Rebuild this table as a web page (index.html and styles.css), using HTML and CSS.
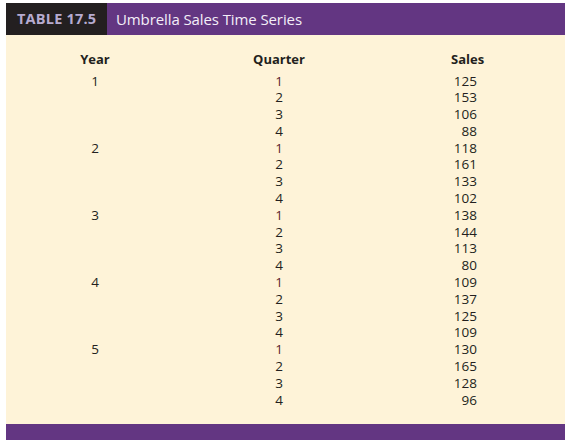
FILE: index.html
```html
<!DOCTYPE html>
<html>
<head>
<meta charset="utf-8">
<link rel="stylesheet" href="styles.css">
</head>
<body>
<div class="table">
  <div class="caption">
    <div class="label">TABLE 17.5</div>
    <div class="title">Umbrella Sales Time Series</div>
  </div>
  <div class="body">
    <div class="grid">
      <div class="h c1">Year</div><div class="h c2">Quarter</div><div class="h c3">Sales</div>
      <div class="c1">1</div><div class="c2 q1">1</div><div class="c3"><span>125</span></div>
      <div class="c1"></div><div class="c2">2</div><div class="c3"><span>153</span></div>
      <div class="c1"></div><div class="c2">3</div><div class="c3"><span>106</span></div>
      <div class="c1"></div><div class="c2">4</div><div class="c3"><span>88</span></div>
      <div class="c1">2</div><div class="c2 q1">1</div><div class="c3"><span>118</span></div>
      <div class="c1"></div><div class="c2">2</div><div class="c3"><span>161</span></div>
      <div class="c1"></div><div class="c2">3</div><div class="c3"><span>133</span></div>
      <div class="c1"></div><div class="c2">4</div><div class="c3"><span>102</span></div>
      <div class="c1">3</div><div class="c2 q1">1</div><div class="c3"><span>138</span></div>
      <div class="c1"></div><div class="c2">2</div><div class="c3"><span>144</span></div>
      <div class="c1"></div><div class="c2">3</div><div class="c3"><span>113</span></div>
      <div class="c1"></div><div class="c2">4</div><div class="c3"><span>80</span></div>
      <div class="c1">4</div><div class="c2 q1">1</div><div class="c3"><span>109</span></div>
      <div class="c1"></div><div class="c2">2</div><div class="c3"><span>137</span></div>
      <div class="c1"></div><div class="c2">3</div><div class="c3"><span>125</span></div>
      <div class="c1"></div><div class="c2">4</div><div class="c3"><span>109</span></div>
      <div class="c1">5</div><div class="c2 q1">1</div><div class="c3"><span>130</span></div>
      <div class="c1"></div><div class="c2">2</div><div class="c3"><span>165</span></div>
      <div class="c1"></div><div class="c2">3</div><div class="c3"><span>128</span></div>
      <div class="c1"></div><div class="c2">4</div><div class="c3"><span>96</span></div>
    </div>
  </div>
  <div class="footer"></div>
</div>
</body>
</html>
```

FILE: styles.css
```css
html, body {
  margin: 0;
  padding: 0;
  background: #ffffff;
}
.table {
  margin: 3px 0 0 6px;
  width: 559px;
  font-family: "Open Sans", "Noto Sans", sans-serif;
  color: #231f20;
}
.caption {
  display: flex;
  height: 32px;
  background: #633682;
}
.label {
  width: 101px;
  flex: none;
  background: #231f20;
  color: #b6abd0;
  font-weight: 700;
  font-size: 14.5px;
  line-height: 32px;
  padding-left: 11px;
  box-sizing: border-box;
  letter-spacing: 0.2px;
  white-space: nowrap;
}
.title {
  color: #f3eef8;
  font-size: 15px;
  line-height: 32px;
  padding-left: 9px;
  letter-spacing: -0.1px;
}
.body {
  background: #fef3d8;
  padding: 15.5px 0 15.5px 0;
}
.grid {
  display: grid;
  grid-template-columns: 178px 190px 1fr;
  font-size: 13.5px;
  line-height: 16.8px;
}
.grid > div {
  height: 16.8px;
}
.c1, .c2 {
  text-align: center;
}
.c3 span {
  display: inline-block;
  width: 24px;
  margin-left: 79px;
  text-align: right;
}
.h {
  font-weight: 700;
  font-size: 13px;
  line-height: 17px;
  height: 17px !important;
  margin-bottom: 5px;
}
.h.c3 {
  padding-left: 77px;
}
.q1 {
  color: #5b1e2c;
}
.footer {
  height: 16px;
  background: #633682;
}
```
